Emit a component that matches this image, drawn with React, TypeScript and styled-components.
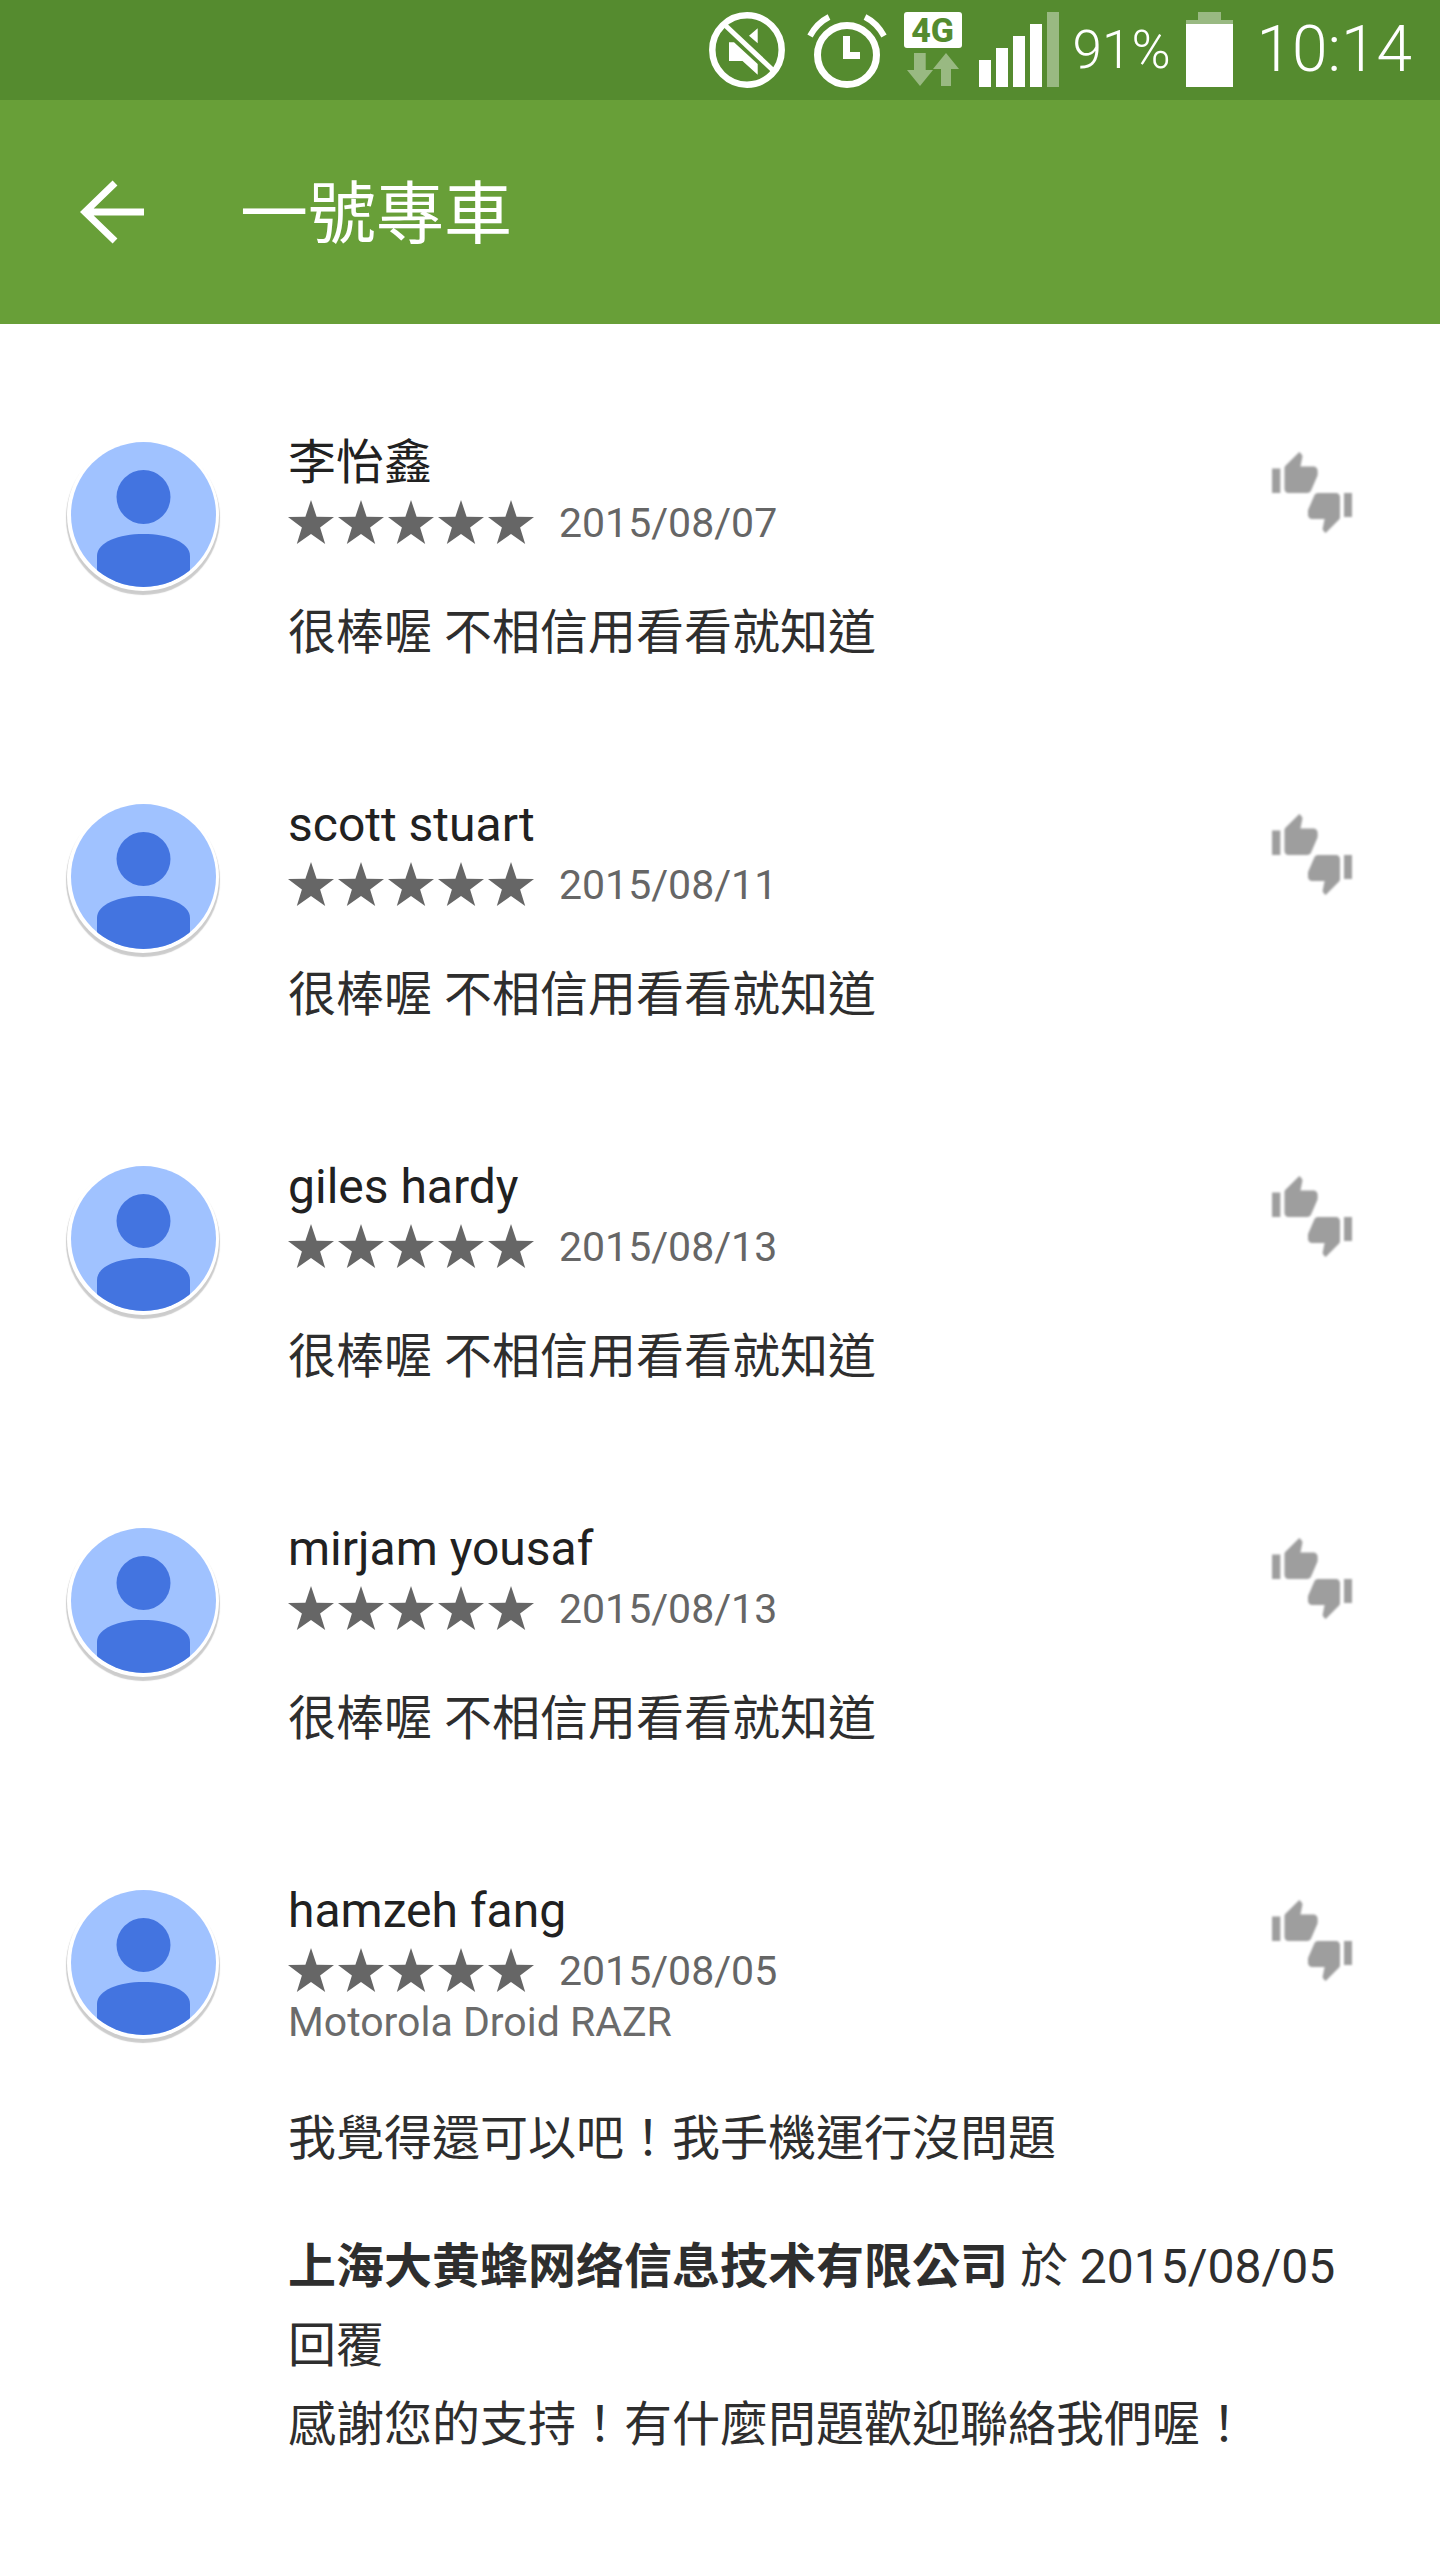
import React from 'react';
import styled, { createGlobalStyle } from 'styled-components';

const Global = createGlobalStyle`
  html, body { margin: 0; padding: 0; background: #fff; }
  body { font-family: Roboto, "Noto Sans CJK TC", sans-serif; }
`;

const Page = styled.div`
  width: 1440px;
  height: 2560px;
  overflow: hidden;
  background: #fff;
`;

const StatusBar = styled.div`
  height: 100px;
  background: #558b2f;
  display: flex;
  align-items: center;
  justify-content: flex-end;
  padding-right: 28px;
  color: #fff;
  font-weight: 350;
`;

const StatusIcon = styled.svg<{ $gap?: number }>`
  display: block;
  flex: none;
  margin-left: ${(p) => p.$gap ?? 0}px;
`;

const Network = styled.div`
  width: 58px;
  height: 76px;
  flex: none;
  margin-left: 16px;
  display: flex;
  flex-direction: column;
  align-items: center;
`;

const NetworkBadge = styled.span`
  width: 58px;
  height: 36px;
  border-radius: 3px;
  background: #fff;
  color: #558b2f;
  font-size: 34px;
  font-weight: 800;
  line-height: 36px;
  text-align: center;
`;

const BatteryLevel = styled.span`
  font-size: 53px;
  margin-left: 14px;
  line-height: 100px;
`;

const Clock = styled.span`
  font-size: 64px;
  margin-left: 24px;
  line-height: 100px;
`;

const Toolbar = styled.div`
  height: 224px;
  background: #689f38;
  display: flex;
  align-items: center;
  color: #fff;
`;

const BackButton = styled.svg`
  display: block;
  margin: 0 0 0 80px;
  flex: none;
`;

const Title = styled.h1`
  margin: 6px 0 0 96px;
  font-size: 68px;
  font-weight: 400;
  line-height: 1;
`;

const List = styled.div`
  padding-top: 106px;
`;

const Row = styled.div`
  display: flex;
  padding: 0 88px 0 67px;
  min-height: 362px;
  box-sizing: border-box;
`;

const AvatarWrap = styled.div`
  width: 152px;
  height: 152px;
  flex: none;
  margin-top: 9px;
  padding: 3px 4px 0;
  box-sizing: border-box;
  border-radius: 50%;
  background: #fff;
  box-shadow: 0 3px 1px 1px rgba(0, 0, 0, 0.2);
`;

const Content = styled.div`
  flex: 1;
  min-width: 0;
  margin-left: 69px;
  padding-top: 5px;
`;

const Name = styled.div`
  font-size: 48px;
  line-height: 56px;
  color: #212121;
`;

const Meta = styled.div`
  display: flex;
  align-items: center;
  height: 50px;
  margin-top: 6px;
`;

const Stars = styled.div`
  display: flex;
  gap: 4px;
`;

const DateText = styled.span`
  font-size: 41px;
  color: #666;
  margin-left: 25px;
  padding-top: 2px;
`;

const Device = styled.div`
  font-size: 41px;
  line-height: 48px;
  margin-top: 3px;
  padding-bottom: 7px;
  color: #6b6b6b;
`;

const Body = styled.p`
  margin: 58px 0 0;
  font-size: 48px;
  line-height: 56px;
  color: #2e2e2e;
`;

const Reply = styled.p`
  margin: 60px 0 0;
  font-size: 48px;
  line-height: 79px;
  color: #2e2e2e;
`;

const Thumbs = styled.svg`
  display: block;
  flex: none;
  margin: 22px 0 0 -80px;
  filter: blur(0.9px);
`;

const Avatar = () => (
  <svg width="145" height="145" viewBox="0 0 145 145" style={{ display: 'block' }}>
    <defs>
      <clipPath id="avatarClip">
        <circle cx="72.5" cy="72.5" r="72.5" />
      </clipPath>
    </defs>
    <circle cx="72.5" cy="72.5" r="72.5" fill="#a0c2ff" />
    <g clipPath="url(#avatarClip)" fill="#4374e0">
      <circle cx="72.5" cy="55" r="27" />
      <path d="M26 145V114C26 100 48 92 72.5 92S119 100 119 114V145Z" />
    </g>
  </svg>
);

const Star = () => (
  <svg width="46" height="44" viewBox="0 0 46 44">
    <polygon
      fill="#666"
      points="23,0 28.6,16.7 46,16.9 32.1,27.4 37.2,44 23,34 8.8,44 13.9,27.4 0,16.9 17.4,16.7"
    />
  </svg>
);

const thumb =
  'M1 21h4V9H1v12zm22-11c0-1.1-.9-2-2-2h-6.31l.95-4.57.03-.32c0-.41-.17-.79-.44-1.06L14.17 1 7.59 7.59C7.22 7.95 7 8.45 7 9v10c0 1.1.9 2 2 2h9c.83 0 1.54-.5 1.84-1.22l3.02-7.05c.09-.23.14-.47.14-.73v-2z';

const ThumbIcons = () => (
  <Thumbs width="80" height="82" viewBox="0 0 80 82">
    <g fill="#9e9e9e">
      <path transform="translate(-2 -2) scale(2.07 2.05)" d={thumb} />
      <path transform="translate(82 83) scale(-2)" d={thumb} />
    </g>
  </Thumbs>
);

type Review = { name: string; date: string; device?: string; body: string };

const reviews: Review[] = [
  { name: '李怡鑫', date: '2015/08/07', body: '很棒喔 不相信用看看就知道' },
  { name: 'scott stuart', date: '2015/08/11', body: '很棒喔 不相信用看看就知道' },
  { name: 'giles hardy', date: '2015/08/13', body: '很棒喔 不相信用看看就知道' },
  { name: 'mirjam yousaf', date: '2015/08/13', body: '很棒喔 不相信用看看就知道' },
  {
    name: 'hamzeh fang',
    date: '2015/08/05',
    device: 'Motorola Droid RAZR',
    body: '我覺得還可以吧！我手機運行沒問題',
  },
];

export default function App() {
  return (
    <Page>
      <Global />
      <StatusBar>
        <StatusIcon width="76" height="76" viewBox="0 0 76 76">
          <circle cx="38" cy="38" r="34.7" fill="none" stroke="#fff" strokeWidth="6.5" />
          <path d="M16.7 13.7L63.4 57.7" stroke="#fff" strokeWidth="5" />
          <path d="M48.7 16.3V31.3L40 23.7ZM20 30.3H25L48.7 52V62.7L33.5 49H20Z" fill="#fff" />
        </StatusIcon>
        <StatusIcon $gap={21} width="82" height="76" viewBox="0 0 82 76">
          <circle cx="41" cy="43" r="29.5" fill="none" stroke="#fff" strokeWidth="7" />
          <path d="M37 24H44V40H54V47H37Z" fill="#fff" />
          <path d="M4 24Q11 11 23 5M59 5Q71 11 78 24" fill="none" stroke="#fff" strokeWidth="6" />
        </StatusIcon>
        <Network>
          <NetworkBadge>4G</NetworkBadge>
          <svg width="58" height="40" viewBox="0 0 58 40" fill="#fff" opacity="0.4">
            <path d="M10 5H21.7V22H29L16 38L3 22H10Z" />
            <path d="M37 38V21H29L42 5L55 21H47V38Z" />
          </svg>
        </Network>
        <StatusIcon $gap={17} width="80" height="76" viewBox="0 0 80 76">
          <rect x="0" y="48" width="12" height="27" fill="#fff" />
          <rect x="17" y="36" width="12" height="39" fill="#fff" />
          <rect x="34" y="24" width="12" height="51" fill="#fff" />
          <rect x="51" y="12" width="12" height="63" fill="#fff" />
          <rect x="68" y="0" width="12" height="75" fill="#fff" opacity="0.4" />
        </StatusIcon>
        <BatteryLevel>91%</BatteryLevel>
        <StatusIcon $gap={15} width="47" height="76" viewBox="0 0 47 76">
          <path d="M12 0H35V8H47V12H0V8H12Z" fill="#fff" opacity="0.4" />
          <rect x="0" y="12" width="47" height="63" fill="#fff" />
        </StatusIcon>
        <Clock>10:14</Clock>
      </StatusBar>
      <Toolbar>
        <BackButton width="64" height="64" viewBox="0 0 64 64">
          <path d="M35 3L5 32L35 61M5 32H64" fill="none" stroke="#fff" strokeWidth="7" />
        </BackButton>
        <Title>一號專車</Title>
      </Toolbar>
      <List>
        {reviews.map((r, i) => (
          <Row key={i}>
            <AvatarWrap>
              <Avatar />
            </AvatarWrap>
            <Content>
              <Name>{r.name}</Name>
              <Meta>
                <Stars>
                  {[0, 1, 2, 3, 4].map((s) => (
                    <Star key={s} />
                  ))}
                </Stars>
                <DateText>{r.date}</DateText>
              </Meta>
              {r.device && <Device>{r.device}</Device>}
              <Body>{r.body}</Body>
              {r.device && (
                <Reply>
                  <strong>上海大黄蜂网络信息技术有限公司</strong> 於 2015/08/05 回覆
                  <br />
                  感謝您的支持！有什麼問題歡迎聯絡我們喔！
                </Reply>
              )}
            </Content>
            <ThumbIcons />
          </Row>
        ))}
      </List>
    </Page>
  );
}
